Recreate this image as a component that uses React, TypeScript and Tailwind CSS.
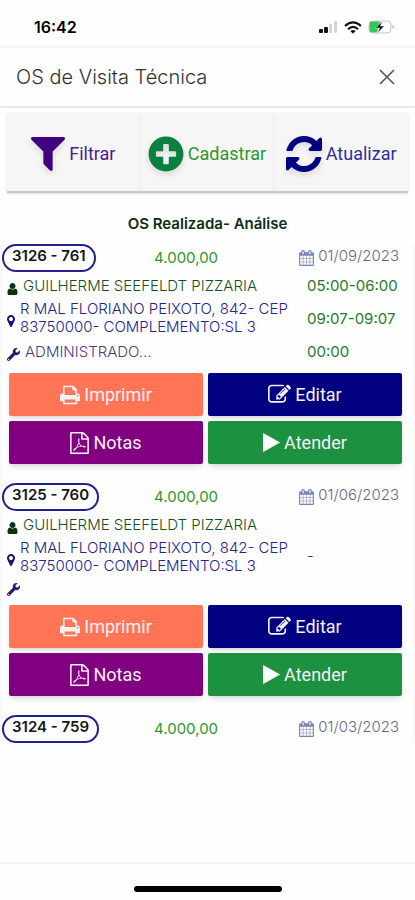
import type { ReactNode } from "react";
import { FaPlusCircle, FaWrench } from "react-icons/fa";

type IconProps = { className?: string };

function Glyph({ box, d, className }: IconProps & { box: string; d: string }) {
  return (
    <svg viewBox={box} className={className} fill="currentColor" aria-hidden="true">
      <path d={d} />
    </svg>
  );
}

const FilterIcon = ({ className }: IconProps) => (
  <Glyph
    className={className}
    box="192 256 1408 1408"
    d="M1595 295q17 41-14 70l-493 493v742q0 42-39 59-13 5-25 5-27 0-45-19l-256-256q-19-19-19-45v-486l-493-493q-31-29-14-70 17-39 59-39h1280q42 0 59 39z"
  />
);
const RefreshIcon = ({ className }: IconProps) => (
  <Glyph
    className={className}
    box="128 128 1536 1536"
    d="M1639 1056q0 5-1 7-64 268-268 434.5t-478 166.5q-146 0-282.5-55t-243.5-157l-129 129q-19 19-45 19t-45-19-19-45v-448q0-26 19-45t45-19h448q26 0 45 19t19 45-19 45l-137 137q71 66 161 102t187 36q134 0 250-65t186-179q11-17 53-117 8-23 30-23h192q13 0 22.5 9.5t9.5 22.5zm25-800v448q0 26-19 45t-45 19h-448q-26 0-45-19t-19-45 19-45l138-138q-148-137-349-137-134 0-250 65t-186 179q-11 17-53 117-8 23-30 23h-199q-13 0-22.5-9.5t-9.5-22.5v-7q65-268 270-434.5t480-166.5q146 0 284 55.5t245 156.5l130-129q19-19 45-19t45 19 19 45z"
  />
);
const PrintIcon = ({ className }: IconProps) => (
  <Glyph
    className={className}
    box="64 64 1664 1664"
    d="M448 1536h896v-256h-896v256zm0-640h896v-384h-160q-40 0-68-28t-28-68v-160h-640v640zm1152 64q0-26-19-45t-45-19-45 19-19 45 19 45 45 19 45-19 19-45zm128 0v416q0 13-9.5 22.5t-22.5 9.5h-224v160q0 40-28 68t-68 28h-960q-40 0-68-28t-28-68v-160h-224q-13 0-22.5-9.5t-9.5-22.5v-416q0-79 56.5-135.5t135.5-56.5h64v-544q0-40 28-68t68-28h672q40 0 88 20t76 48l152 152q28 28 48 76t20 88v256h64q79 0 135.5 56.5t56.5 135.5z"
  />
);
const EditIcon = ({ className }: IconProps) => (
  <Glyph
    className={className}
    box="0 0 1792 1792"
    d="M888 1184l116-116-152-152-116 116v56h96v96h56zm440-720q-16-16-33 1l-350 350q-17 17-1 33t33-1l350-350q17-17 1-33zm80 594v190q0 119-84.5 203.5t-203.5 84.5h-832q-119 0-203.5-84.5t-84.5-203.5v-832q0-119 84.5-203.5t203.5-84.5h832q63 0 117 25 15 7 18 23 3 17-9 29l-49 49q-14 14-32 8-23-6-45-6h-832q-66 0-113 47t-47 113v832q0 66 47 113t113 47h832q66 0 113-47t47-113v-126q0-13 9-22l64-64q15-15 35-7t20 29zm-96-738l288 288-672 672h-288v-288zm444 132l-92 92-288-288 92-92q28-28 68-28t68 28l152 152q28 28 28 68t-28 68z"
  />
);
const PdfIcon = ({ className }: IconProps) => (
  <Glyph
    className={className}
    box="128 0 1536 1792"
    d="M1596 380q28 28 48 76t20 88v1152q0 40-28 68t-68 28h-1344q-40 0-68-28t-28-68v-1600q0-40 28-68t68-28h896q40 0 88 20t76 48zm-444-244v376h376q-10-29-22-41l-313-313q-12-12-41-22zm384 1528v-1024h-416q-40 0-68-28t-28-68v-416h-768v1536h1280zm-514-593q33 26 84 56 59-7 117-7 147 0 177 49 16 22 2 52 0 1-1 2l-2 2v1q-6 38-71 38-48 0-115-20t-130-53q-221 24-392 83-153 262-242 262-15 0-28-7l-24-12q-1-1-6-5-10-10-6-36 9-40 56-91.500t132-96.500q14-9 23 6 2 2 2 4 52-85 107-197 68-136 104-262-24-82-30.500-159.500t6.500-127.500q11-40 42-40h22q23 0 35 15 18 21 9 68-2 6-4 8 1 3 1 8v30q-2 123-14 192 55 164 146 238zm-576 411q52-24 137-158-51 40-87.500 84t-49.500 74zm398-920q-15 42-2 132 1-7 7-44 0-3 7-43 1-4 4-8-1-1-1-2-1-2-1-3-1-22-13-36 0 1-1 2v2zm-124 661q135-54 284-81-2-1-13-9.500t-16-13.500q-76-67-127-176-27 86-83 197-30 56-45 83zm646-16q-24-24-140-24 76 28 124 28 14 0 18-1 0-1-2-3z"
  />
);
const PlayIcon = ({ className }: IconProps) => (
  <Glyph
    className={className}
    box="192 112 1408 1568"
    d="M1576 927l-1328 738q-23 13-39.5 3t-16.5-36v-1472q0-26 16.5-36t39.5 3l1328 738q23 13 23 31t-23 31z"
  />
);
const CalendarIcon = ({ className }: IconProps) => (
  <Glyph
    className={className}
    box="64 0 1664 1792"
    d="M192 1664h288v-288h-288v288zm352 0h320v-288h-320v288zm-352-352h288v-320h-288v320zm352 0h320v-320h-320v320zm-352-384h288v-288h-288v288zm736 736h320v-288h-320v288zm-384-736h320v-288h-320v288zm768 736h288v-288h-288v288zm-384-352h320v-320h-320v320zm-352-864v-288q0-13-9.5-22.5t-22.5-9.5h-64q-13 0-22.5 9.5t-9.5 22.5v288q0 13 9.5 22.5t22.5 9.5h64q13 0 22.5-9.5t9.5-22.5zm736 864h288v-320h-288v320zm-384-384h320v-288h-320v288zm384 0h288v-288h-288v288zm32-480v-288q0-13-9.5-22.5t-22.5-9.5h-64q-13 0-22.5 9.5t-9.5 22.5v288q0 13 9.5 22.5t22.5 9.5h64q13 0 22.5-9.5t9.5-22.5zm384-64v1280q0 52-38 90t-90 38h-1408q-52 0-90-38t-38-90v-1280q0-52 38-90t90-38h128v-96q0-66 47-113t113-47h64q66 0 113 47t47 113v96h384v-96q0-66 47-113t113-47h64q66 0 113 47t47 113v96h128q52 0 90 38t38 90z"
  />
);
const UserIcon = ({ className }: IconProps) => (
  <Glyph
    className={className}
    box="256 128 1280 1536"
    d="M1536 1399q0 109-62.5 187t-150.5 78h-854q-88 0-150.5-78t-62.5-187q0-85 8.5-160.5t31.5-152 58.5-131 94-89 134.5-34.5q131 128 313 128t313-128q76 0 134.5 34.5t94 89 58.5 131 31.5 152 8.5 160.5zm-256-887q0 159-112.5 271.5t-271.5 112.5-271.5-112.5-112.5-271.5 112.5-271.5 271.5-112.5 271.5 112.5 112.5 271.5z"
  />
);
const MarkerIcon = ({ className }: IconProps) => (
  <Glyph
    className={className}
    box="384 128 1024 1536"
    d="M1152 640q0-106-75-181t-181-75-181 75-75 181 75 181 181 75 181-75 75-181zm256 0q0 109-33 179l-364 774q-16 33-47.5 52t-67.5 19-67.5-19-46.5-52l-365-774q-33-70-33-179 0-212 150-362t362-150 362 150 150 362z"
  />
);

function StatusBar() {
  return (
    <div className="flex h-12 items-center justify-between border-b-2 border-[#f7f7f7] pr-5 pl-[34px] pt-2">
      <span className="text-base font-semibold text-black">16:42</span>
      <div className="flex items-center gap-1.5">
        <svg viewBox="0 0 19 13" className="h-[13px] w-[19px]" aria-hidden="true">
          <rect x="0" y="8" width="4" height="4" rx="1" fill="#111" />
          <rect x="5" y="6" width="4" height="6" rx="1" fill="#111" />
          <rect x="10" y="3" width="3" height="9" rx="1" fill="#d4d4d4" />
          <rect x="15" y="0" width="3" height="12" rx="1" fill="#d4d4d4" />
        </svg>
        <svg viewBox="0 0 18 13" className="h-[13px] w-[18px]" fill="none" stroke="#111" strokeWidth="2.2" aria-hidden="true">
          <path d="M1 5 Q9 -2.4 17 5" />
          <path d="M4 8.2 Q9 3.6 14 8.2" />
          <path d="M6.4 10 Q9 7.8 11.600 10 L9 12.800 Z" fill="#111" stroke="none" />
        </svg>
        <svg viewBox="0 0 27 14" className="h-3.5 w-[27px]" aria-hidden="true">
          <rect x="1" y="1" width="22" height="12" rx="4" fill="#fff" stroke="#c4c4c4" />
          <path d="M4 1.500h8l-3 11H4a2.500 2.500 0 0 1-2.500-2.500V4A2.500 2.500 0 0 1 4 1.500z" fill="#34c759" />
          <path d="M24.500 5v4q1.500-.5 1.500-2t-1.500-2z" fill="#b5b5b5" />
          <path d="M14.500 1L7.500 8h4L9.500 13l7-7h-4z" fill="#111" stroke="#fff" strokeWidth=".5" />
        </svg>
      </div>
    </div>
  );
}

function ToolButton({ icon, label, className }: { icon: ReactNode; label: string; className: string }) {
  return (
    <button
      type="button"
      className={`flex items-center justify-center gap-1 pt-1 font-[Roboto,sans-serif] text-lg ${className}`}
    >
      {icon}
      {label}
    </button>
  );
}

function ActionButton({ icon, label, className }: { icon: ReactNode; label: string; className: string }) {
  return (
    <button
      type="button"
      className={`flex h-[43px] items-center justify-center gap-1 rounded-xs font-[Roboto,sans-serif] text-lg text-[#f4f0f4] shadow-md ${className}`}
    >
      {icon}
      {label}
    </button>
  );
}

type Order = {
  code: string;
  value: string;
  date: string;
  technician?: string;
  times?: string[];
  open: boolean;
};

const orders: Order[] = [
  {
    code: "3126 - 761",
    value: "4.000,00",
    date: "01/09/2023",
    technician: "ADMINISTRADO...",
    times: ["05:00-06:00", "09:07-09:07", "00:00"],
    open: true,
  },
  { code: "3125 - 760", value: "4.000,00", date: "01/06/2023", open: true },
  { code: "3124 - 759", value: "4.000,00", date: "01/03/2023", open: false },
];

function OrderCard({ order }: { order: Order }) {
  return (
    <article className="border-x-2 border-[#f9f9f9]">
      <div className="flex items-start">
        <div className="flex w-[37%]">
          <span className="inline-flex h-7 items-center rounded-full border-2 border-[#22228c] px-2 pb-1 text-[15px] leading-5 font-semibold text-[#161616]">
            {order.code}
          </span>
        </div>
        <span className="flex-1 pt-1 text-[15px] leading-5 text-[#2d962d]">{order.value}</span>
        <span className="flex items-start gap-1 pr-3.5 text-[15px] leading-6 font-light text-[#686880]">
          <CalendarIcon className="mt-1.5 h-4 w-[15px] text-[#7d83b4]" />
          {order.date}
        </span>
      </div>
      {order.open && (
        <>
          <div className="flex pt-[5px] pl-[5px] text-[15px] leading-[18px] font-light">
            <div className="flex w-[300px] flex-col gap-1">
              <p className="flex items-center gap-[5px] text-[#14501e]">
                <UserIcon className="mt-1.5 h-3 w-[11px] text-[#07340f]" />
                GUILHERME SEEFELDT PIZZARIA
              </p>
              <p className="flex items-center gap-[5px] pt-px text-[#24248c]">
                <MarkerIcon className="mt-1.5 h-3 w-2 shrink-0 text-[#16167c]" />
                <span>R MAL FLORIANO PEIXOTO, 842- CEP 83750000- COMPLEMENTO:SL 3</span>
              </p>
              <p className="flex min-h-4 items-center gap-[5px] text-[#4c3a80]">
                <FaWrench className="mt-1 size-[13px] text-[#30186c]" />
                {order.technician && <span className="py-[3px]">{order.technician}</span>}
              </p>
            </div>
            {order.times ? (
              <ul className="flex flex-col justify-between pb-[3px] font-normal text-[#1f7a2b]">
                {order.times.map((time) => (
                  <li key={time}>{time}</li>
                ))}
              </ul>
            ) : (
              <span className="self-center text-[#333]">-</span>
            )}
          </div>
          <div className="grid grid-cols-2 gap-[5px] pt-[9px] pr-[11px] pb-[19px] pl-[7px]">
            <ActionButton icon={<PrintIcon className="size-5" />} label="Imprimir" className="bg-[#ff7556]" />
            <ActionButton icon={<EditIcon className="size-[23px]" />} label="Editar" className="bg-[#000080]" />
            <ActionButton icon={<PdfIcon className="h-[22px] w-[19px]" />} label="Notas" className="bg-[#800080]" />
            <ActionButton icon={<PlayIcon className="h-[19px] w-[17px] text-white" />} label="Atender" className="bg-[#1c913f]" />
          </div>
        </>
      )}
    </article>
  );
}

export default function App() {
  return (
    <div className="flex min-h-screen flex-col bg-[#fefefe] font-[Inter,sans-serif]">
      <StatusBar />
      <header className="flex h-[60px] items-center justify-between border-b-2 border-[#e8e8e8] pr-5 pl-4">
        <h1 className="text-xl font-light text-[#333]">OS de Visita Técnica</h1>
        <button type="button" aria-label="Fechar" className="text-[#555]">
          <svg viewBox="0 0 16 16" className="size-4" stroke="currentColor" strokeWidth="1.6" aria-hidden="true">
            <path d="M1 1L15 15M15 1L1 15" />
          </svg>
        </button>
      </header>
      <nav className="mx-[7px] mt-[5px] grid h-20 grid-cols-3 divide-x divide-[#ececec] border-b-2 border-[#c9c9c9] bg-[#f6f6f6] shadow-sm">
        <ToolButton
          icon={<FilterIcon className="size-[34px] drop-shadow-md" />}
          label="Filtrar"
          className="text-[#4b1b92] [&>svg]:text-[#41007f]"
        />
        <ToolButton
          icon={<FaPlusCircle className="size-9 drop-shadow-md" />}
          label="Cadastrar"
          className="text-[#2d962d] [&>svg]:text-[#0b8040]"
        />
        <ToolButton
          icon={<RefreshIcon className="size-9 drop-shadow-md" />}
          label="Atualizar"
          className="text-[#30309a] [&>svg]:text-[#000080]"
        />
      </nav>
      <main className="flex-1 pt-[21px]">
        <h2 className="pb-2.5 text-center text-[15px] leading-5 font-semibold text-[#0d2c12]">OS Realizada- Análise</h2>
        {orders.map((order) => (
          <OrderCard key={order.code} order={order} />
        ))}
      </main>
      <footer className="flex h-[38px] items-end justify-center border-t-2 border-[#f2f2f2] pb-2">
        <div className="h-1.5 w-[148px] rounded-full bg-black" />
      </footer>
    </div>
  );
}
